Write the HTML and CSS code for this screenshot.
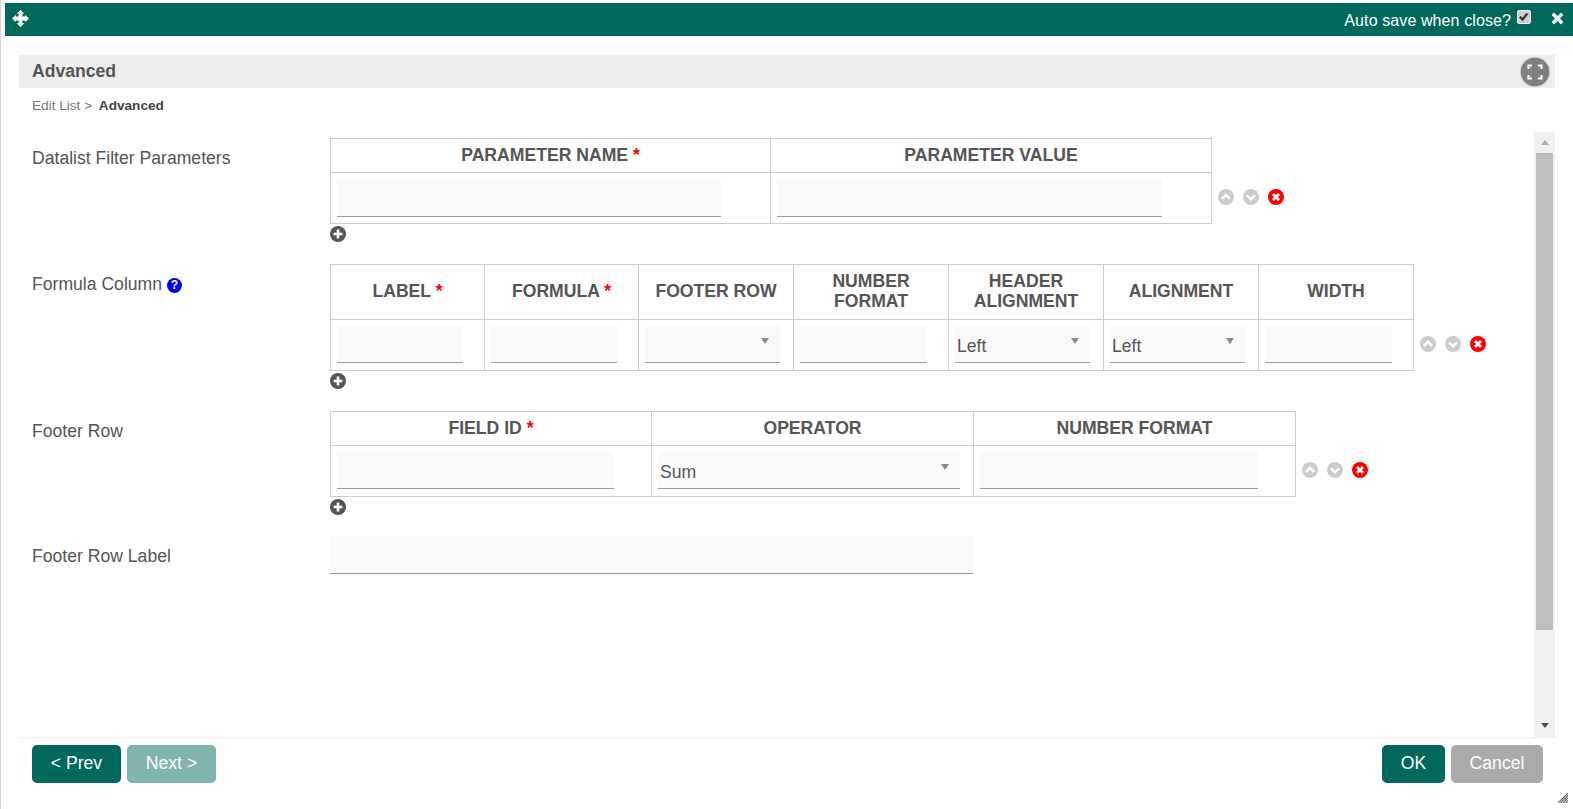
FILE: index.html
```html
<!DOCTYPE html>
<html lang="en">
<head>
<meta charset="utf-8">
<title>Advanced</title>
<link rel="stylesheet" href="styles.css">
</head>
<body>
<svg class="sprites" width="0" height="0" aria-hidden="true">
  <symbol id="i-up" viewBox="0 0 16 16"><circle cx="8" cy="8" r="8" fill="#ccc"/><path d="M4 9.800 8 5.800l4 4" fill="none" stroke="#fff" stroke-width="2.400"/></symbol>
  <symbol id="i-down" viewBox="0 0 16 16"><circle cx="8" cy="8" r="8" fill="#ccc"/><path d="M4 6.400l4 4 4-4" fill="none" stroke="#fff" stroke-width="2.400"/></symbol>
  <symbol id="i-del" viewBox="0 0 16 16"><circle cx="8" cy="8" r="8" fill="#f00"/><path d="M5 5l6 6M11 5l-6 6" fill="none" stroke="#fff" stroke-width="2.800"/></symbol>
  <symbol id="i-add" viewBox="0 0 16 16"><circle cx="8" cy="8" r="8" fill="#555"/><path d="M8 3.600v8.800M3.600 8h8.800" fill="none" stroke="#fff" stroke-width="2.600"/></symbol>
</svg>
<div class="dialog">
  <header class="titlebar">
    <svg class="move" viewBox="0 0 18 18" width="17" height="17"><path d="M9 0l4 4h-2v3h3V5l4 4-4 4v-2h-3v3h2l-4 4-4-4h2v-3H4v2L0 9l4-4v2h3V4H5z" fill="#fff"/></svg>
    <div class="titlebar-right">
      <span class="autosave">Auto save when close?</span>
      <span class="check"><svg viewBox="0 0 13 13" width="13" height="13"><path d="M2.800 6.800l2.700 2.700 4.800-6" fill="none" stroke="#333" stroke-width="2.200"/></svg></span>
      <svg class="close" viewBox="0 0 13 13" width="13" height="13"><path d="M1.800 1.800l9.400 9.400M11.200 1.800l-9.400 9.400" fill="none" stroke="#fff" stroke-width="3.400"/></svg>
    </div>
  </header>

  <div class="section-head">
    <span class="section-title">Advanced</span>
    <span class="expand"><svg viewBox="0 0 16 16" width="16" height="16"><path d="M1.500 5v-3.500H5M11 1.500h3.500V5M14.500 11v3.500H11M5 14.500H1.500V11" fill="none" stroke="#fff" stroke-width="2.200"/></svg></span>
  </div>
  <div class="crumbs">Edit List &gt; <b>Advanced</b></div>

  <div class="content">
    <div class="form">
      <div class="row row-a">
        <label class="field-label">Datalist Filter Parameters</label>
        <div class="field">
          <div class="grid-line">
            <table class="grid grid-a">
              <thead><tr><th>PARAMETER NAME <i class="req">*</i></th><th>PARAMETER VALUE</th></tr></thead>
              <tbody><tr><td><input class="inp"></td><td><input class="inp"></td></tr></tbody>
            </table>
            <div class="actions">
              <svg class="ico"><use href="#i-up"/></svg><svg class="ico"><use href="#i-down"/></svg><svg class="ico"><use href="#i-del"/></svg>
            </div>
          </div>
          <svg class="ico add"><use href="#i-add"/></svg>
        </div>
      </div>

      <div class="row row-b">
        <label class="field-label">Formula Column <span class="help">?</span></label>
        <div class="field">
          <div class="grid-line">
            <table class="grid grid-b">
              <thead><tr>
                <th>LABEL <i class="req">*</i></th><th>FORMULA <i class="req">*</i></th><th>FOOTER ROW</th><th>NUMBER FORMAT</th><th>HEADER ALIGNMENT</th><th>ALIGNMENT</th><th>WIDTH</th>
              </tr></thead>
              <tbody><tr>
                <td><input class="inp"></td>
                <td><input class="inp"></td>
                <td><span class="sel"><select><option></option></select></span></td>
                <td><input class="inp"></td>
                <td><span class="sel"><select><option>Left</option></select></span></td>
                <td><span class="sel"><select><option>Left</option></select></span></td>
                <td><input class="inp"></td>
              </tr></tbody>
            </table>
            <div class="actions">
              <svg class="ico"><use href="#i-up"/></svg><svg class="ico"><use href="#i-down"/></svg><svg class="ico"><use href="#i-del"/></svg>
            </div>
          </div>
          <svg class="ico add"><use href="#i-add"/></svg>
        </div>
      </div>

      <div class="row row-c">
        <label class="field-label">Footer Row</label>
        <div class="field">
          <div class="grid-line">
            <table class="grid grid-c">
              <thead><tr><th>FIELD ID <i class="req">*</i></th><th>OPERATOR</th><th>NUMBER FORMAT</th></tr></thead>
              <tbody><tr>
                <td><input class="inp"></td>
                <td><span class="sel"><select><option>Sum</option></select></span></td>
                <td><input class="inp"></td>
              </tr></tbody>
            </table>
            <div class="actions">
              <svg class="ico"><use href="#i-up"/></svg><svg class="ico"><use href="#i-down"/></svg><svg class="ico"><use href="#i-del"/></svg>
            </div>
          </div>
          <svg class="ico add"><use href="#i-add"/></svg>
        </div>
      </div>

      <div class="row row-d">
        <label class="field-label">Footer Row Label</label>
        <div class="field"><input class="inp inp-wide"></div>
      </div>
    </div>

    <div class="scrollbar">
      <span class="arrow-up"></span>
      <span class="thumb"></span>
      <span class="track-space"></span>
      <span class="arrow-down"></span>
    </div>
  </div>

  <footer class="buttons">
    <div class="btn-group">
      <button class="btn btn-prev">&lt; Prev</button>
      <button class="btn btn-next">Next &gt;</button>
    </div>
    <div class="btn-group">
      <button class="btn btn-ok">OK</button>
      <button class="btn btn-cancel">Cancel</button>
    </div>
  </footer>
  <svg class="resize" viewBox="0 0 10 10" width="10" height="10"><path d="M0 10 10 0M2.500 10 10 2.500M5 10l5-5M7.500 10 10 7.500" stroke="#666" stroke-width="1.200" fill="none"/></svg>
</div>
</body>
</html>
```

FILE: styles.css
```css
* { box-sizing: border-box; }
html, body { margin: 0; padding: 0; height: 100%; overflow: hidden; }
body {
  background: #fff;
  color: #555;
  font-family: "Liberation Sans", Arial, sans-serif;
  font-size: 17.6px;
  border-left: 1px solid #d4d4d4;
}
.sprites { display: block; width: 0; height: 0; }
.dialog {
  position: relative;
  display: flex;
  flex-direction: column;
  height: 809px;
  padding: 3px 0 0 4px;
}
.titlebar {
  flex: none;
  height: 33px;
  background: #00695c;
  display: flex;
  justify-content: space-between;
  align-items: center;
  padding: 0 9px 0 7px;
  color: #fff;
}
.move { display: block; margin-top: -3px; }
.titlebar-right { display: flex; align-items: center; }
.autosave { font-size: 16px; letter-spacing: 0.1px; margin-top: 2px; }
.check {
  width: 14px;
  height: 14px;
  margin: -6px -1px 0 6px;
  background: #cfcfcf;
  border: 1px solid #eee;
  border-radius: 2px;
  display: block;
}
.check svg { display: block; margin: -1px 0 0 -1px; }
.close { margin: -3px 0 0 21px; display: block; }

.section-head {
  flex: none;
  margin: 19px 18px 0 14px;
  height: 33px;
  background: #eee;
  display: flex;
  align-items: center;
  justify-content: space-between;
  padding: 0 6px 0 13px;
}
.section-title { font-size: 17.6px; font-weight: bold; }
.expand {
  width: 28px;
  height: 28px;
  border-radius: 50%;
  background: #808080;
  box-shadow: 0 0 2px #666;
  display: flex;
  align-items: center;
  justify-content: center;
}
.expand svg { display: block; }
.crumbs {
  flex: none;
  margin: 10px 0 0 27px;
  height: 16px;
  line-height: 16px;
  font-size: 13.6px;
  color: #777;
}
.crumbs b { color: #444; margin-left: 3px; }

.content {
  flex: 1;
  min-height: 0;
  margin: 18px 18px 0 14px;
  display: flex;
  border-bottom: 1px solid #eee;
}
.form { flex: 1; padding: 6px 0 0 13px; min-width: 0; }
.row { display: flex; }
.row-b { margin-top: 22px; }
.row-c { margin-top: 22px; }
.row-d { margin-top: 21px; }
.field-label { flex: none; width: 298px; padding-top: 10px; line-height: 20px; color: #555; }
.help {
  display: inline-block;
  width: 15px;
  height: 15px;
  border-radius: 50%;
  background: #00e;
  color: #fff;
  font-size: 12px;
  font-weight: bold;
  line-height: 15px;
  text-align: center;
  vertical-align: 1px;
}
.field { flex: 1; min-width: 0; }
.grid-line { display: flex; align-items: flex-end; }
.grid {
  flex: none;
  table-layout: fixed;
  border-collapse: collapse;
  border: 1px solid #ccc;
}
.grid-a { width: 882px; }
.grid-a th:first-child { width: 440px; }
.grid-b { width: 1084px; }
.grid-b th:nth-child(-n+2) { width: 154px; }
.grid-c { width: 966px; }
.grid-c th:first-child { width: 321px; }
.grid th {
  border: 1px solid #ccc;
  font-weight: bold;
  font-size: 17.6px;
  line-height: 20px;
  padding: 5px 6px 7px;
  text-align: center;
  color: #555;
}
.grid-b th { height: 55px; }
.grid-a th, .grid-c th { height: 34px; }
.grid td { border: 1px solid #ccc; padding: 6px; height: 51px; vertical-align: top; }
.req { color: #f00; font-style: normal; font-weight: bold; }
.inp {
  display: block;
  height: 37px;
  background: #f9f9f9;
  border: 0;
  border-bottom: 1px solid #999;
  padding: 0 3px;
  font: inherit;
  color: #555;
}
.grid-a .inp { width: 384px; height: 38px; }
.grid-a td:last-child .inp { width: 385px; }
.grid-b .inp { width: 126px; }
.grid-b td:nth-child(n+4) .inp { width: 127px; }
.grid-c .inp { width: 277px; }
.grid-c td:last-child .inp { width: 278px; }
.inp-wide { width: 643px; height: 38px; }
.sel { display: block; position: relative; }
.sel::after {
  content: "";
  position: absolute;
  right: 11px;
  top: 12px;
  border-left: 4.500px solid transparent;
  border-right: 4.500px solid transparent;
  border-top: 6px solid #888;
}
.sel select {
  appearance: none;
  -webkit-appearance: none;
  display: block;
  width: 100%;
  height: 37px;
  background: #f9f9f9;
  border: 0;
  border-bottom: 1px solid #999;
  border-radius: 0;
  padding: 3px 3px 0 2px;
  font: inherit;
  color: #555;
}
.grid-b .sel { width: 135px; }
.grid-c .sel { width: 302px; }
.actions { display: flex; gap: 9px; padding: 0 0 19px 6px; }
.ico { display: block; width: 16px; height: 16px; flex: none; }
.add { margin-top: 2px; }

.scrollbar {
  flex: none;
  width: 21px;
  background: #f0f0f0;
  display: flex;
  flex-direction: column;
  align-items: center;
}
.arrow-up {
  flex: none;
  margin-top: 8px;
  border-left: 4.500px solid transparent;
  border-right: 4.500px solid transparent;
  border-bottom: 5px solid #aaa;
}
.thumb { flex: none; width: 17px; height: 477px; margin-top: 8px; background: #bebebe; }
.track-space { flex: 1; }
.arrow-down {
  flex: none;
  margin-bottom: 9px;
  border-left: 4.500px solid transparent;
  border-right: 4.500px solid transparent;
  border-top: 5px solid #505050;
}

.buttons {
  flex: none;
  height: 71px;
  padding: 7px 30px 0 27px;
  display: flex;
  justify-content: space-between;
  align-items: flex-start;
}
.btn-group { display: flex; gap: 6px; }
.btn {
  height: 38px;
  border: 0;
  border-radius: 5px;
  color: #fff;
  font: inherit;
  font-size: 17.6px;
  padding: 0 0 2px;
}
.btn-prev { width: 89px; background: #00695c; }
.btn-next { width: 89px; background: #80b4ad; }
.btn-ok { width: 63px; background: #00695c; }
.btn-cancel { width: 92px; background: #aaa; }
.resize { position: absolute; right: 5px; bottom: 6px; }
```
